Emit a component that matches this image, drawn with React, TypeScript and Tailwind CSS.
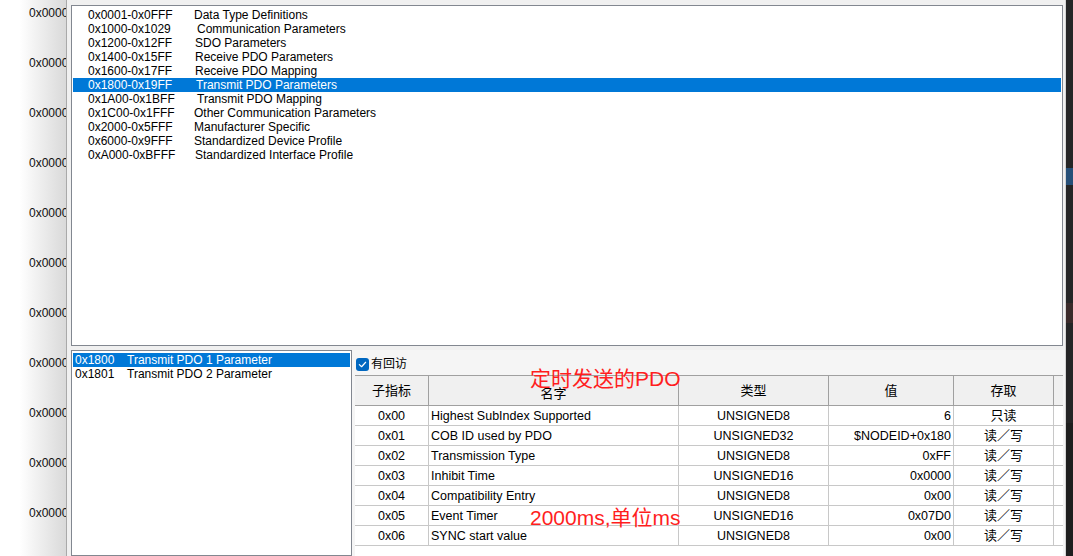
import React from 'react';

const font = { fontFamily: '"Liberation Sans", "Noto Sans CJK SC", sans-serif' };

const ranges = [
  { range: '0x0001-0x0FFF', name: 'Data Type Definitions', pad: 'pl-0' },
  { range: '0x1000-0x1029', name: 'Communication Parameters', pad: 'pl-[3px]' },
  { range: '0x1200-0x12FF', name: 'SDO Parameters', pad: 'pl-px' },
  { range: '0x1400-0x15FF', name: 'Receive PDO Parameters', pad: 'pl-px' },
  { range: '0x1600-0x17FF', name: 'Receive PDO Mapping', pad: 'pl-px' },
  { range: '0x1800-0x19FF', name: 'Transmit PDO Parameters', pad: 'pl-[2px]', selected: true },
  { range: '0x1A00-0x1BFF', name: 'Transmit PDO Mapping', pad: 'pl-[3px]' },
  { range: '0x1C00-0x1FFF', name: 'Other Communication Parameters', pad: 'pl-0' },
  { range: '0x2000-0x5FFF', name: 'Manufacturer Specific', pad: 'pl-0' },
  { range: '0x6000-0x9FFF', name: 'Standardized Device Profile', pad: 'pl-0' },
  { range: '0xA000-0xBFFF', name: 'Standardized Interface Profile', pad: 'pl-px' },
];

const objects = [
  { index: '0x1800', name: 'Transmit PDO 1 Parameter', selected: true },
  { index: '0x1801', name: 'Transmit PDO 2 Parameter' },
];

const subs = [
  { sub: '0x00', name: 'Highest SubIndex Supported', type: 'UNSIGNED8', value: '6', access: '只读' },
  { sub: '0x01', name: 'COB ID used by PDO', type: 'UNSIGNED32', value: '$NODEID+0x180', access: '读／写' },
  { sub: '0x02', name: 'Transmission Type', type: 'UNSIGNED8', value: '0xFF', access: '读／写' },
  { sub: '0x03', name: 'Inhibit Time', type: 'UNSIGNED16', value: '0x0000', access: '读／写' },
  { sub: '0x04', name: 'Compatibility Entry', type: 'UNSIGNED8', value: '0x00', access: '读／写' },
  { sub: '0x05', name: 'Event Timer', type: 'UNSIGNED16', value: '0x07D0', access: '读／写' },
  { sub: '0x06', name: 'SYNC start value', type: 'UNSIGNED8', value: '0x00', access: '读／写' },
];

const gutter = Array.from({ length: 11 });

const App: React.FC = () => {
  return (
    <div className="flex h-[556px] w-[1073px] overflow-hidden bg-white text-[12px] text-black" style={font}>
      {/* address gutter of the window behind */}
      <div className="w-[67px] shrink-0 bg-gradient-to-r from-white from-30% to-[#d9d9d9] border-r border-[#a9a9a9] overflow-hidden">
        <div className="flex flex-col pt-[5px]">
          {gutter.map((_, i) => (
            <div key={i} className="h-[50px] pl-[29px] leading-[16px] whitespace-nowrap text-[#101010]">0x0000</div>
          ))}
        </div>
      </div>

      {/* dialog */}
      <div className="w-[999px] shrink-0 bg-[#f0f0f0] flex flex-col pl-[4px] pt-[5px] border-r border-[#d4d4d4]">
        <div className="w-[992px] h-[341px] shrink-0 border border-[#828790] bg-white pt-[2px] px-px">
          {ranges.map((r) => (
            <div
              key={r.range}
              className={`flex h-[14px] items-center leading-[14px] whitespace-nowrap ${r.selected ? 'bg-[#0078d7] text-white' : ''}`}
            >
              <span className="w-[121px] pl-[15px] shrink-0">{r.range}</span>
              <span className={r.pad}>{r.name}</span>
            </div>
          ))}
        </div>

        <div className="flex flex-1 mt-[4px] min-h-0">
          <div className="w-[281px] shrink-0 border border-[#828790] bg-white pt-[2px] px-px">
            {objects.map((o) => (
              <div
                key={o.index}
                className={`flex h-[14px] items-center leading-[14px] whitespace-nowrap ${o.selected ? 'bg-[#0078d7] text-white' : ''}`}
              >
                <span className="w-[54px] pl-[2px] shrink-0">{o.index}</span>
                <span>{o.name}</span>
              </div>
            ))}
          </div>

          <div className="relative flex-1 flex flex-col pl-[3px] bg-[#f5f5f5]">
            <label className="flex items-center gap-[2px] h-[25px] pl-px pt-[3px]">
              <span className="w-[13px] h-[13px] rounded-[3px] bg-[#0067c0] flex items-center justify-center">
                <svg width="9" height="9" viewBox="0 0 10 10" fill="none">
                  <path d="M1.5 5.2 L4 7.5 L8.5 2.5" stroke="white" strokeWidth="1.3" strokeLinecap="round" strokeLinejoin="round" />
                </svg>
              </span>
              <span className="text-[12px]">有回访</span>
            </label>

            <div className="flex-1 w-[708px] bg-white border-t border-[#a0a0a0] text-[12.5px]">
              <div className="grid grid-cols-[74px_250px_150px_125px_100px_9px] h-[30px] bg-[#f0f0f0] border-b border-[#a0a0a0] text-[13px]">
                <div className="flex items-center justify-center border-r border-[#a0a0a0]">子指标</div>
                <div className="flex items-end justify-center pb-[2px] border-r border-[#a0a0a0]">名字</div>
                <div className="flex items-center justify-center border-r border-[#a0a0a0]">类型</div>
                <div className="flex items-center justify-center border-r border-[#a0a0a0]">值</div>
                <div className="flex items-center justify-center border-r border-[#a0a0a0]">存取</div>
                <div />
              </div>
              {subs.map((s) => (
                <div key={s.sub} className="grid grid-cols-[74px_250px_150px_125px_100px_9px] h-[20px] border-b border-[#c8c8c8] leading-[20px] whitespace-nowrap">
                  <div className="text-center border-r border-[#c8c8c8]">{s.sub}</div>
                  <div className="pl-[2px] border-r border-[#c8c8c8]">{s.name}</div>
                  <div className="text-center border-r border-[#c8c8c8]">{s.type}</div>
                  <div className="text-right pr-[2px] border-r border-[#c8c8c8]">{s.value}</div>
                  <div className="text-center border-r border-[#c8c8c8] text-[13px]">{s.access}</div>
                  <div />
                </div>
              ))}
            </div>

            {/* red annotations drawn over the screenshot */}
            <div className="absolute left-[178px] top-[16px] text-[21px] leading-[26px] text-[#ff1e1e] whitespace-nowrap">定时发送的PDO</div>
            <div className="absolute left-[178px] top-[155px] text-[21px] leading-[26px] text-[#ff1e1e] whitespace-nowrap">2000ms,单位ms</div>
          </div>
        </div>
      </div>

      {/* editor behind, dark */}
      <div className="flex-1 bg-[#252526] flex flex-col">
        <div className="h-[168px]" />
        <div className="h-[17px] bg-[#264f78]" />
        <div className="h-[118px]" />
        <div className="h-[20px] bg-[#3a2a2a]" />
        <div className="h-[100px]" />
        <div className="flex-1 bg-[#1e1e1e]" />
      </div>
    </div>
  );
};

export default App;
